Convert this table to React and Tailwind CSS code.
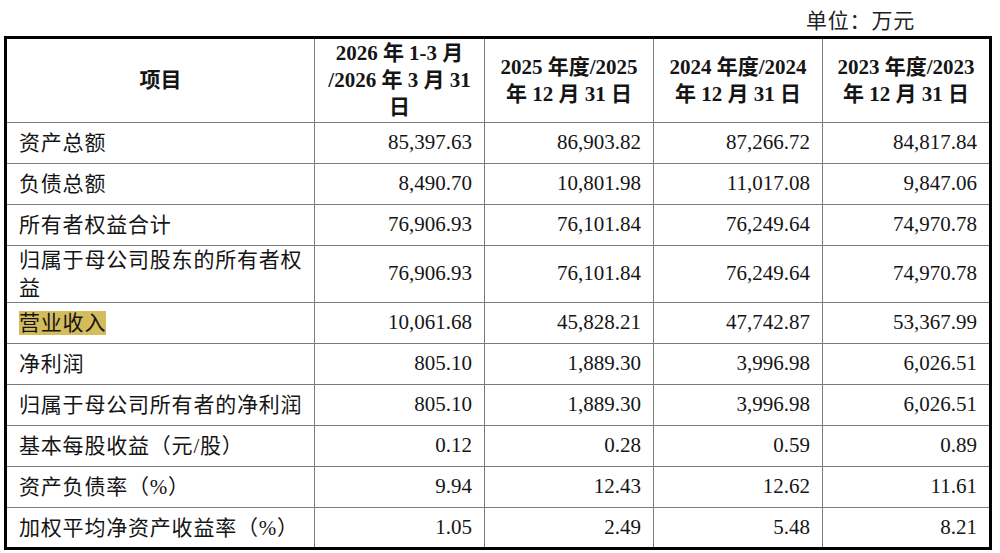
import React from "react";

// 主要财务数据表
const COLS = [
  ["2026 年 1-3 月", "/2026 年 3 月 31", "日"],
  ["2025 年度/2025", "年 12 月 31 日"],
  ["2024 年度/2024", "年 12 月 31 日"],
  ["2023 年度/2023", "年 12 月 31 日"],
];

const ROWS = [
  { name: "资产总额", vals: ["85,397.63", "86,903.82", "87,266.72", "84,817.84"] },
  { name: "负债总额", vals: ["8,490.70", "10,801.98", "11,017.08", "9,847.06"] },
  { name: "所有者权益合计", vals: ["76,906.93", "76,101.84", "76,249.64", "74,970.78"] },
  { name: ["归属于母公司股东的所有者权", "益"], vals: ["76,906.93", "76,101.84", "76,249.64", "74,970.78"], tall: true },
  { name: "营业收入", vals: ["10,061.68", "45,828.21", "47,742.87", "53,367.99"], mark: true },
  { name: "净利润", vals: ["805.10", "1,889.30", "3,996.98", "6,026.51"] },
  { name: "归属于母公司所有者的净利润", vals: ["805.10", "1,889.30", "3,996.98", "6,026.51"] },
  { name: "基本每股收益（元/股）", vals: ["0.12", "0.28", "0.59", "0.89"] },
  { name: "资产负债率（%）", vals: ["9.94", "12.43", "12.62", "11.61"] },
  { name: "加权平均净资产收益率（%）", vals: ["1.05", "2.49", "5.48", "8.21"] },
];

function NameCell({ row }) {
  const text = Array.isArray(row.name) ? (
    <>
      {row.name[0]}
      <br />
      {row.name[1]}
    </>
  ) : (
    row.name
  );
  return (
    <td className="border border-[#7a7a7a] border-l-[3px] border-l-black pl-[12px] pr-2 text-left leading-[28px] tracking-[0.8px]">
      {row.mark ? <span className="bg-[#d4bc5c]">{text}</span> : text}
    </td>
  );
}

export default function App() {
  return (
    <div className="w-[1000px] h-[553px] bg-white text-[#151515] font-['Liberation_Serif','Noto_Sans_CJK_SC',serif] text-[21px]">
      <div className="h-[36px] pt-[6px] pr-[85px] text-right leading-[30px] tracking-[0.8px] text-[#222]">
        单位：万元
      </div>
      <div className="pl-[4px]">
        <table className="w-[985px] table-fixed border-collapse border-[3px] border-black">
          <colgroup>
            <col className="w-[309px]" />
            <col className="w-[170px]" />
            <col className="w-[169px]" />
            <col className="w-[169px]" />
            <col className="w-[168px]" />
          </colgroup>
          <thead>
            <tr className="h-[85px]">
              <th className="border border-[#7a7a7a] border-l-[3px] border-l-black border-t-[3px] border-t-black font-bold">
                项目
              </th>
              {COLS.map((lines, i) => (
                <th
                  key={i}
                  className={`border border-[#7a7a7a] border-t-[3px] border-t-black px-1 font-bold leading-[27px] ${
                    i === COLS.length - 1 ? "border-r-[3px] border-r-black" : ""
                  }`}
                >
                  {lines.map((l, j) => (
                    <div key={j} className="whitespace-nowrap">
                      {l}
                    </div>
                  ))}
                </th>
              ))}
            </tr>
          </thead>
          <tbody>
            {ROWS.map((row, r) => (
              <tr key={r} className={row.tall ? "h-[56px]" : "h-[41px]"}>
                <NameCell row={row} />
                {row.vals.map((v, i) => (
                  <td
                    key={i}
                    className={`border border-[#7a7a7a] pr-[12px] text-right ${
                      i === row.vals.length - 1 ? "border-r-[3px] border-r-black" : ""
                    } ${r === ROWS.length - 1 ? "border-b-[3px] border-b-black" : ""}`}
                  >
                    {v}
                  </td>
                ))}
              </tr>
            ))}
          </tbody>
        </table>
      </div>
    </div>
  );
}
